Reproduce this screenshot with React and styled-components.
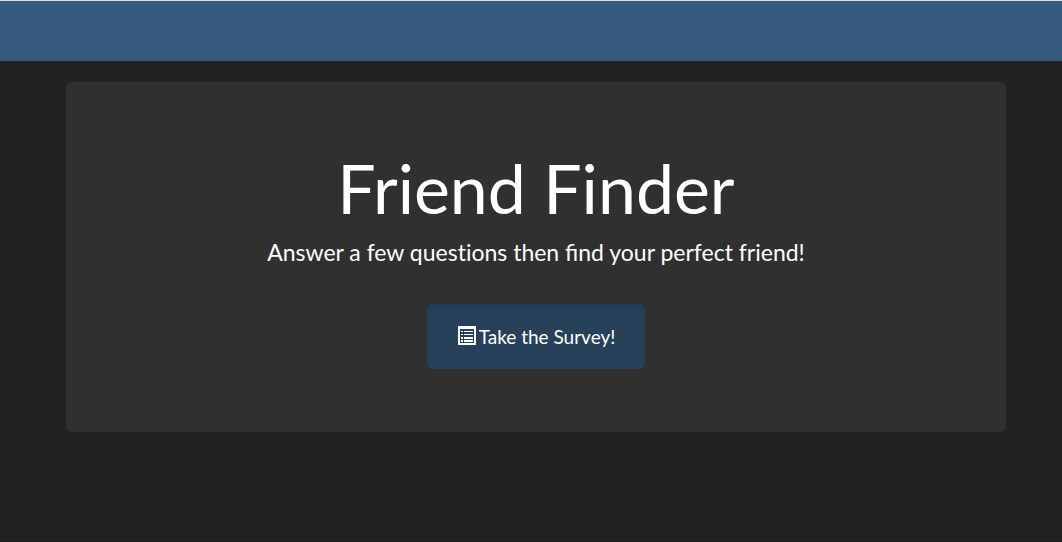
import React from "react";
import styled, { createGlobalStyle } from "styled-components";

const GlobalStyle = createGlobalStyle`
  *, *::before, *::after { box-sizing: border-box; }
  body {
    margin: 0;
    background: #222222;
    color: #ffffff;
    font-family: Lato, "Liberation Sans", sans-serif;
  }
`;

const Page = styled.div`
  display: flex;
  flex-direction: column;
  min-height: 100vh;
  border-top: 1px solid #dcdcdc;
  border-bottom: 1px solid #1f181c;
`;

const Navbar = styled.header`
  height: 60px;
  margin-bottom: 21px;
  background: #375a7f;
`;

const Container = styled.main`
  padding: 0 56px 0 66px;
`;

const Jumbotron = styled.section`
  max-width: 940px;
  margin: 0 auto;
  padding: 68px 60px 63px;
  border-radius: 6px;
  background: #303030;
  text-align: center;
`;

const Title = styled.h1`
  margin: 0;
  font-size: 68px;
  font-weight: 400;
  line-height: 75px;
`;

const Lead = styled.p`
  margin: 10px 0 35px;
  font-size: 23px;
  line-height: 34px;
`;

const PlainLetters = styled.span`
  font-variant-ligatures: none;
`;

const SurveyButton = styled.button`
  display: inline-flex;
  align-items: center;
  gap: 3px;
  padding: 18px 29px 18px 30px;
  border: 1px solid #264059;
  border-radius: 6px;
  background: #28415b;
  box-shadow: inset 0 3px 5px rgba(0, 0, 0, 0.125);
  color: #ffffff;
  font-family: inherit;
  font-size: 19px;
  line-height: 27px;
  cursor: pointer;
`;

const Icon = styled.svg`
  display: block;
  width: 18px;
  height: 21px;
  flex: none;
`;

const ListIcon = () => (
  <Icon viewBox="0 0 18 21" fill="#ffffff" shapeRendering="crispEdges" aria-hidden="true">
    <path fillRule="evenodd" d="M0 0H18V19H0ZM2 3V17H16V3Z" />
    <path d="M3 5H5V6H3ZM6 5H15V6H6ZM3 8H5V9H3ZM6 8H15V9H6ZM3 11H5V13H3ZM6 11H15V13H6ZM3 14H5V16H3ZM6 14H15V16H6Z" />
  </Icon>
);

export default function App() {
  return (
    <>
      <GlobalStyle />
      <Page>
        <Navbar />
        <Container>
          <Jumbotron>
            <Title>Friend Finder</Title>
            <Lead>
              Answer a few <PlainLetters>questions</PlainLetters> then find your perfect friend!
            </Lead>
            <SurveyButton type="button">
              <ListIcon />
              Take the Survey!
            </SurveyButton>
          </Jumbotron>
        </Container>
      </Page>
    </>
  );
}
